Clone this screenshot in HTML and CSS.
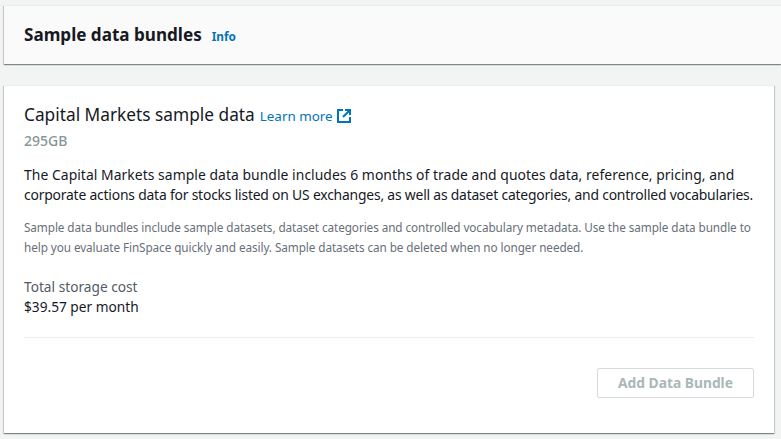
FILE: index.html
```html
<!DOCTYPE html>
<html lang="en">
<head>
<meta charset="utf-8">
<title>Sample data bundles</title>
<link rel="stylesheet" href="styles.css">
</head>
<body>
<header class="page-head">
  <h1 class="page-title">Sample data bundles</h1>
  <a class="info" href="#">Info</a>
</header>
<main class="card">
  <div class="title-row">
    <h2 class="card-title">Capital Markets sample data</h2>
    <a class="learn" href="#">Learn more
      <svg class="ext" viewBox="0 0 14 14" width="14" height="14" aria-hidden="true"><path d="M6 1H1v12h12V8" fill="none" stroke="#0073bb" stroke-width="2"/><path d="M8 1h5v5M13 1L6 8" fill="none" stroke="#0073bb" stroke-width="2"/></svg>
    </a>
  </div>
  <div class="size">295GB</div>
  <p class="desc"><span class="line wide">The Capital Markets sample data bundle includes 6 months of trade and quotes data, reference, pricing, and</span> <span class="line tight">corporate actions data for stocks listed on US exchanges, as well as dataset categories, and controlled vocabularies.</span></p>
  <p class="note"><span class="line note-a">Sample data bundles include sample datasets, dataset categories and controlled vocabulary metadata. Use the sample data bundle to</span> <span class="line note-b">help you evaluate FinSpace quickly and easily. Sample datasets can be deleted when no longer needed.</span></p>
  <div class="cost">
    <div class="cost-label">Total storage cost</div>
    <div class="cost-value">$39.57 per month</div>
  </div>
  <div class="actions">
    <button class="btn" disabled>Add Data Bundle</button>
  </div>
</main>
</body>
</html>
```
FILE: styles.css
```css
* { box-sizing: border-box; }
html, body { height: 100%; }
body {
  margin: 0;
  padding: 5px 0 0 4px;
  overflow: hidden;
  background: #f2f3f3;
  color: #16191f;
  font-family: "Noto Sans", sans-serif;
  font-size: 14px;
  line-height: 20px;
}
.page-head {
  display: flex;
  align-items: baseline;
  gap: 10px;
  height: 59px;
  padding: 17px 20px 0;
  background: #fafafa;
  border-top: 1px solid #eaeded;
  box-shadow: 0 1px 1px 0 rgba(0,28,36,.3), 1px 1px 1px 0 rgba(0,28,36,.15), -1px 1px 1px 0 rgba(0,28,36,.15);
}
.page-title { margin: 0; font-size: 17.1px; line-height: 24px; font-weight: 700; }
.info { font-size: 11.8px; font-weight: 700; color: #0073bb; text-decoration: none; }
.card {
  width: 770px;
  height: 348px;
  margin-top: 21px;
  padding: 18px 20px 0;
  background: #fff;
  border-top: 1px solid #eaeded;
  box-shadow: 0 1px 1px 0 rgba(0,28,36,.3), 1px 1px 1px 0 rgba(0,28,36,.15), -1px 1px 1px 0 rgba(0,28,36,.15);
}
.title-row { display: flex; align-items: baseline; gap: 5px; }
.card-title { margin: 0; font-size: 17.3px; line-height: 22px; font-weight: 400; }
.learn { color: #0073bb; text-decoration: none; font-size: 13.4px; }
.ext { margin-left: 1px; vertical-align: -2px; }
.size { margin-top: 5px; color: #879596; font-weight: 500; font-size: 14px; }
.desc { margin: 14px 0 0; font-size: 13.9px; }
.line { display: block; white-space: nowrap; }
.wide { letter-spacing: .05px; }
.tight { letter-spacing: -.2px; }
.note { margin: 12px 0 0; font-size: 11.75px; color: #687078; }
.note-a { letter-spacing: -.085px; }
.note-b { letter-spacing: -.08px; }
.cost { margin-top: 20px; padding-bottom: 20px; border-bottom: 1px solid #eaeded; font-size: 13.7px; }
.cost-label { color: #545b64; }
.actions { display: flex; justify-content: flex-end; margin-top: 30px; }
.btn {
  width: 157px;
  height: 30px;
  padding: 0;
  background: #fff;
  border: 1px solid #d5dbdb;
  border-radius: 2px;
  color: #aab7b8;
  font: 700 13.8px/20px "Noto Sans", sans-serif;
}
```
